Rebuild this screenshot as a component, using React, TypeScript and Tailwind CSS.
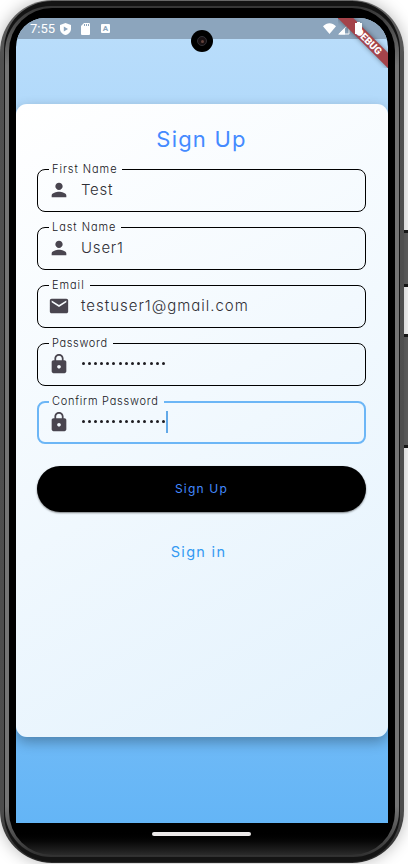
import type { ReactNode } from "react";

const person = "M12 12c2.21 0 4-1.79 4-4s-1.79-4-4-4-4 1.79-4 4 1.79 4 4 4zm0 2c-2.67 0-8 1.34-8 4v2h16v-2c0-2.66-5.33-4-8-4z";
const mail = "M20 4H4c-1.1 0-1.99.9-1.99 2L2 18c0 1.1.9 2 2 2h16c1.1 0 2-.9 2-2V6c0-1.1-.9-2-2-2zm0 4-8 5-8-5V6l8 5 8-5v2z";
const lock = "M18 8h-1V6c0-2.76-2.24-5-5-5S7 3.24 7 6v2H6c-1.1 0-2 .9-2 2v10c0 1.1.9 2 2 2h12c1.1 0 2-.9 2-2V10c0-1.1-.9-2-2-2zm-6 9c-1.1 0-2-.9-2-2s.9-2 2-2 2 .9 2 2-.9 2-2 2zm3.1-9H8.9V6c0-1.71 1.39-3.1 3.1-3.1s3.1 1.39 3.1 3.1v2z";

function Field({ label, labelClass, icon, active, children }: { label: string; labelClass: string; icon: string; active?: boolean; children: ReactNode }) {
  return (
    <fieldset className={`h-[49px] min-w-0 rounded-[8px] ${active ? "border-2 border-[#6cb6f6] pl-[9px]" : "border border-[#000000] pl-[10px]"}`}>
      <legend className={`ml-[1px] h-[13px] overflow-visible whitespace-nowrap pl-[3px] text-[11px] font-light leading-[13px] text-[#15151a] ${labelClass}`}>{label}</legend>
      <div className="-mt-[2px] flex h-[32px] items-center">
        <svg viewBox="0 0 24 24" className="h-[22px] w-[22px] shrink-0 fill-[#49454f]"><path d={icon} /></svg>
        <div className="ml-[11px] flex items-center whitespace-nowrap text-[#303036]">{children}</div>
      </div>
    </fieldset>
  );
}

function Dots() {
  return (
    <div className="ml-[0.500px] flex h-[22px] -translate-y-px items-center gap-[3.2px]">
      {Array.from({ length: 14 }, (_, i) => <span key={i} className="size-[3px] rounded-full bg-[#1d1b20]" />)}
    </div>
  );
}

function StatusBar() {
  return (
    <div className="flex h-[21px] items-center bg-[#8ca5bd] pl-[14px] text-white">
      <span className="w-[26px] font-['Roboto',sans-serif] text-[13px] leading-[20px]">7:55</span>
      <svg className="ml-[4px] h-[12px] w-[11px]" viewBox="0 0 11 12"><path fill="white" d="M5.5 0 11 2v4c0 3-2.4 5.2-5.5 6C2.400 11.200 0 9 0 6V2Z" /><path fill="#8ca5bd" d="M3.800 3.500v5L8 6Z" /></svg>
      <svg className="ml-[10px] h-[12px] w-[9px]" viewBox="0 0 9 12"><path fill="white" d="M3 0h5a1 1 0 0 1 1 1v10a1 1 0 0 1-1 1H1a1 1 0 0 1-1-1V3Z" /><path stroke="#8ca5bd" d="M3.500 1v2M5.500 1v2M7.500 1v2" /></svg>
      <span className="ml-[11px] flex h-[9px] w-[9px] items-center justify-center rounded-[1px] bg-white font-['Roboto',sans-serif] text-[8px] font-bold leading-none text-[#8ca5bd]">A</span>
      <svg className="ml-[213px] h-[12px] w-[13px] shrink-0" viewBox="0 0 13 12"><path fill="white" d="M0 3.300C4-.8 9-.8 13 3.300L6.500 11Z" /></svg>
      <svg className="ml-[2px] h-[12px] w-[12px] shrink-0" viewBox="0 0 12 12"><path fill="none" stroke="white" d="M1.200 11 11 1.200V11Z" /><path fill="white" d="M0 11.500 7 4.500v7Z" /></svg>
    </div>
  );
}

export default function App() {
  return (
    <main className="relative h-[864px] w-[408px] overflow-hidden bg-white font-['Inter',sans-serif] [font-feature-settings:'cv11']">
      <div className="absolute left-[402px] top-[230px] h-[57px] w-[8px] border-y-[3px] border-l-[2px] border-[#191919] bg-[#626262]" />
      <div className="absolute left-[402px] top-[334px] h-[114px] w-[8px] border-y-[3px] border-l-[2px] border-[#191919] bg-[#626262]" />
      <div className="relative h-[863px] w-[404px] rounded-[52px] bg-[linear-gradient(to_bottom,#686868,#505050_7%,#4c4c4c_94%,#292929)] px-[4px] py-[1px] shadow-[0_0_16px_rgba(0,0,0,0.28)]">
        <div className="h-full rounded-[48px] bg-[#141414] px-[1px] py-[5px]">
          <div className="h-full rounded-[46px] bg-[linear-gradient(to_bottom,#363636,#747474_7%,#747474_94%,#303030)] px-[4px] py-[2px]">
            <div className="h-full rounded-[43px] bg-linear-to-b from-black via-black via-97% to-[#2b2b2b] pl-[7px] pr-[6px] pt-[10px]">
              <div className="h-[805px] w-[372px] overflow-hidden rounded-t-[29px] bg-linear-to-b from-[#bbdefb] to-[#64b5f6]">
                <StatusBar />
                <section className="mt-[65px] flex h-[633px] flex-col rounded-[11px] bg-[linear-gradient(150deg,#ffffff,#e3f2fd)] pl-[21px] pr-[22px] shadow-[0_5px_13px_rgba(0,0,0,0.3)]">
                  <h1 className="mt-[20px] text-center text-[22px] font-normal leading-[30px] tracking-[1.2px] text-[#448aff]">Sign Up</h1>
                  <form className="mt-[9px] flex flex-col gap-[9px]">
                    <Field label="First Name" labelClass="w-[73px] tracking-[0.95px]" icon={person}><span className="text-[15px] font-light tracking-[0.7px]">Test</span></Field>
                    <Field label="Last Name" labelClass="w-[72px] tracking-[0.95px]" icon={person}><span className="text-[15px] font-light tracking-[0.8px]">User1</span></Field>
                    <Field label="Email" labelClass="w-[41px] tracking-[0.95px]" icon={mail}><span className="text-[15px] font-light tracking-[0.98px]">testuser1@gmail.com</span></Field>
                    <Field label="Password" labelClass="w-[64px] tracking-[0.65px]" icon={lock}><Dots /></Field>
                    <Field label="Confirm Password" labelClass="w-[115px] tracking-[0.75px]" icon={lock} active><Dots /><span className="ml-[1px] h-[22px] w-[2px] bg-[#62a9e8]" /></Field>
                  </form>
                  <button type="button" className="mt-[22px] h-[46px] shrink-0 rounded-full bg-black text-[12px] font-normal tracking-[1.2px] text-[#448aff] shadow-[0_1px_2px_rgba(0,0,0,0.5)]">Sign Up</button>
                  <a className="mt-[30px] -translate-x-[3px] text-center text-[14.500px] leading-[20px] tracking-[1.3px] text-[#349af2]">Sign in</a>
                </section>
              </div>
            </div>
          </div>
        </div>
      </div>
      <div className="absolute left-[338px] top-[18px] h-[50px] w-[50px] overflow-hidden rounded-tr-[29px]">
        <div className="absolute -left-[11px] top-[18px] flex h-[11px] w-[84px] rotate-45 items-center justify-center bg-[#a4434a] font-['Roboto',sans-serif] text-[10px] font-black text-white shadow-[0_0_5px_rgba(0,0,0,0.4)]"><span>DEBUG</span></div>
      </div>
      <svg className="absolute left-[354px] top-[22px] h-[13px] w-[9px]" viewBox="0 0 9 13"><path fill="white" d="M3 0h3v1h2v11H1V1h2Z" /></svg>
      <div className="absolute left-[191px] top-[30px] flex size-[22px] items-center justify-center rounded-full bg-black">
        <span className="flex size-[10px] items-center justify-center rounded-full border border-[#302f35] bg-[#181012]"><span className="size-[3px] rounded-full bg-[#65443c]" /></span>
      </div>
      <div className="absolute left-[152px] top-[832px] h-[4px] w-[99px] rounded-full bg-[#edeaea]" />
    </main>
  );
}
